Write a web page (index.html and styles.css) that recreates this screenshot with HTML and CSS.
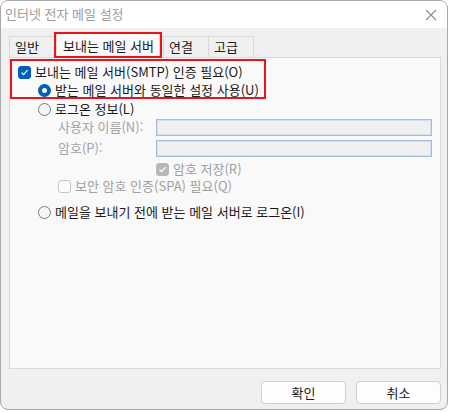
FILE: index.html
```html
<!DOCTYPE html>
<html lang="ko">
<head>
<meta charset="utf-8">
<link rel="stylesheet" href="styles.css">
</head>
<body>
<div class="window">
  <div class="titlebar">
    <span class="title">인터넷 전자 메일 설정</span>
    <svg class="close" width="12" height="12" viewBox="0 0 12 12"><path d="M1 1L11 11M11 1L1 11" stroke="#8a8a8a" stroke-width="1.1" fill="none"/></svg>
  </div>
  <div class="body">
    <div class="tabs">
      <div class="tab first">일반</div>
      <div class="tab active">보내는 메일 서버<span class="mark"></span></div>
      <div class="tab">연결</div>
      <div class="tab">고급</div>
    </div>
    <div class="panel">
      <div class="group">
        <span class="mark group-mark"></span>
        <label class="row top">
          <span class="check checked"><svg width="9" height="9" viewBox="0 0 9 9"><path d="M1.5 4.6L3.6 6.7L7.6 2.2" stroke="#fff" stroke-width="1.2" fill="none"/></svg></span>
          <span>보내는 메일 서버(SMTP) 인증 필요(O)</span>
        </label>
        <label class="row indent1 r2">
          <span class="radio on"></span>
          <span>받는 메일 서버와 동일한 설정 사용(U)</span>
        </label>
      </div>
      <label class="row indent1 r3">
        <span class="radio"></span>
        <span>로그온 정보(L)</span>
      </label>
      <div class="field f1">
        <span class="flabel">사용자 이름(N):</span>
        <span class="input"></span>
      </div>
      <div class="field f2">
        <span class="flabel">암호(P):</span>
        <span class="input"></span>
      </div>
      <label class="row save disabled">
        <span class="check dis-checked"><svg width="9" height="9" viewBox="0 0 9 9"><path d="M1.5 4.6L3.6 6.7L7.6 2.2" stroke="#fff" stroke-width="1.2" fill="none"/></svg></span>
        <span>암호 저장(R)</span>
      </label>
      <label class="row indent2 spa disabled">
        <span class="check dis"></span>
        <span>보안 암호 인증(SPA) 필요(Q)</span>
      </label>
      <label class="row indent1 last">
        <span class="radio"></span>
        <span>메일을 보내기 전에 받는 메일 서버로 로그온(I)</span>
      </label>
    </div>
    <div class="footer">
      <button class="btn">확인</button>
      <button class="btn">취소</button>
    </div>
  </div>
</div>
</body>
</html>
```

FILE: styles.css
```css
html, body {
  margin: 0;
  padding: 0;
  background: #ffffff;
}
body {
  font-family: "Noto Sans CJK KR", "Noto Sans", sans-serif;
  font-size: 13px;
  color: #1a1a1a;
}
.window {
  width: 448px;
  height: 410px;
  box-sizing: border-box;
  border: 1px solid #a8a8a8;
  border-radius: 8px;
  background: #f0f0f0;
  overflow: hidden;
  display: flex;
  flex-direction: column;
}
.titlebar {
  height: 27px;
  flex: none;
  background: #ffffff;
  display: flex;
  align-items: center;
  justify-content: space-between;
  padding: 0 10px 0 4px;
}
.title {
  color: #9c9c9c;
  font-size: 13px;
  line-height: 16px;
  margin-top: -2px;
}
.close {
  margin-top: 1px;
}
.body {
  flex: 1;
  display: flex;
  flex-direction: column;
  padding: 4px 6px 0 8px;
}
.tabs {
  display: flex;
  align-items: flex-end;
  height: 25px;
  position: relative;
  z-index: 1;
}
.tab {
  height: 21px;
  box-sizing: border-box;
  border: 1px solid #d9d9d9;
  border-bottom: none;
  background: #f0f0f0;
  line-height: 20px;
  padding: 0 0 0 5px;
  width: 46px;
  margin-right: -1px;
}
.tab.first {
  width: 46px;
  padding-left: 5px;
}
.tab.active {
  position: relative;
  height: 25px;
  width: 104px;
  background: #f9f9f9;
  padding-left: 6px;
  padding-top: 2px;
  margin: 0 2px 0 2px;
  line-height: 20px;
  border-bottom: 1px solid #f9f9f9;
  margin-bottom: -1px;
}
.tab.active + .tab {
  margin-left: 1px;
}
.mark {
  position: absolute;
  border: 2px solid #e8141c;
  pointer-events: none;
}
.tab .mark {
  left: -3px;
  top: -2px;
  right: -3px;
  bottom: -1px;
}
.panel {
  height: 312px;
  box-sizing: border-box;
  border: 1px solid #d9d9d9;
  background: #f9f9f9;
  position: relative;
  padding: 0;
  display: flex;
  flex-direction: column;
}
.group {
  position: relative;
  display: flex;
  flex-direction: column;
}
.group-mark {
  left: 0px;
  top: 1px;
  width: 252px;
  height: 36px;
}
.row {
  display: flex;
  align-items: center;
  height: 18px;
  line-height: 18px;
  white-space: nowrap;
}
.row.top {
  margin-top: 5px;
  padding-left: 8px;
  gap: 4px;
}
.indent1 {
  padding-left: 28px;
  gap: 4px;
}
.r2 {
  margin-top: 0;
}
.r3 {
  margin-top: 1px;
}
.check {
  width: 13px;
  height: 13px;
  box-sizing: border-box;
  border-radius: 3px;
  border: 1px solid #8a8a8a;
  background: #fff;
  display: inline-flex;
  align-items: center;
  justify-content: center;
  flex: none;
}
.check.checked {
  background: #005fb8;
  border-color: #005fb8;
}
.check.dis-checked {
  background: #b8b8b8;
  border-color: #b8b8b8;
}
.check.dis {
  border-color: #c4c4c4;
  background: #fbfbfb;
}
.radio {
  width: 13px;
  height: 13px;
  box-sizing: border-box;
  border-radius: 50%;
  border: 1px solid #7a7a7a;
  background: #f6f6f6;
  flex: none;
}
.radio.on {
  border: 4px solid #005fb8;
  background: #fff;
}
.disabled {
  color: #a0a0a0;
}
.field {
  display: flex;
  align-items: center;
  padding-left: 48px;
  padding-right: 8px;
  height: 18px;
}
.f1 {
  margin-top: 0;
}
.f2 {
  margin-top: 3px;
}
.flabel {
  color: #a3a3a3;
  width: 98px;
  flex: none;
  line-height: 18px;
}
.input {
  flex: 1;
  height: 17px;
  box-sizing: border-box;
  border: 1px solid #a8bcd6;
  box-shadow: inset 0 0 0 1px #cfe0f4;
  background: #f0f0f0;
  margin-right: 0;
}
.save {
  padding-left: 146px;
  gap: 4px;
  margin-top: 3px;
}
.indent2 {
  padding-left: 48px;
  gap: 4px;
}
.spa {
  margin-top: -1px;
}
.last {
  margin-top: 8px;
}
.footer {
  display: flex;
  justify-content: flex-end;
  gap: 10px;
  padding: 12px 0 0 0;
}
.btn {
  width: 85px;
  height: 23px;
  box-sizing: border-box;
  border: 1px solid #d0d0d0;
  border-radius: 4px;
  background: #fdfdfd;
  font-family: "Noto Sans CJK KR", "Noto Sans", sans-serif;
  font-size: 13px;
  color: #1a1a1a;
  padding: 0;
  line-height: 20px;
}
```
